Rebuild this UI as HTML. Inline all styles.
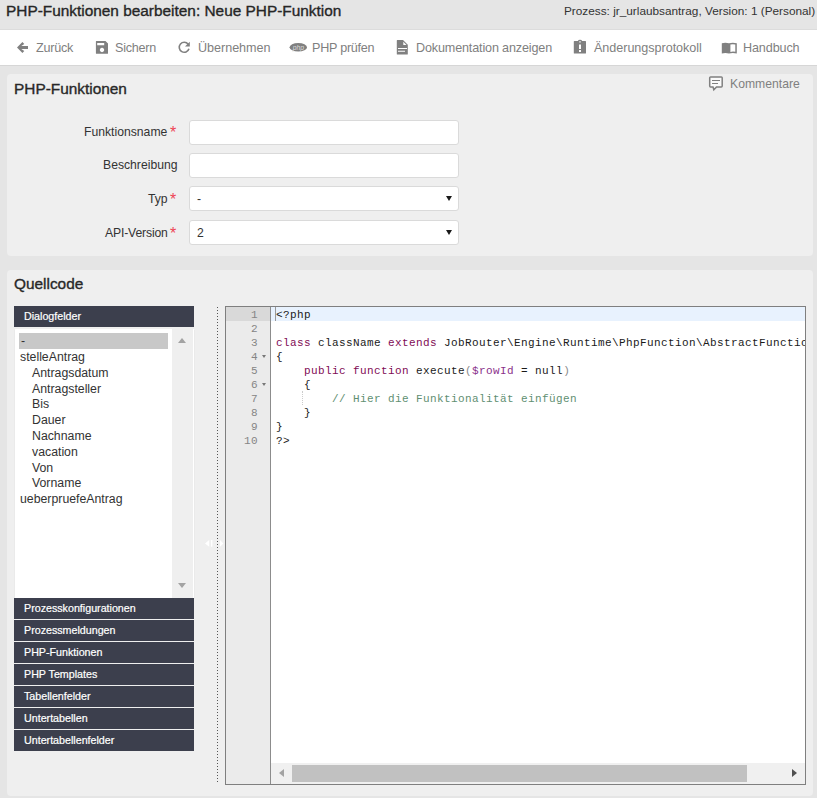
<!DOCTYPE html>
<html><head><meta charset="utf-8">
<style>
*{box-sizing:border-box;margin:0;padding:0}
html,body{width:817px;height:798px;overflow:hidden;background:#e5e5e5;font-family:"Liberation Sans",sans-serif;color:#333}
.a{position:absolute;white-space:nowrap}
#hdr{position:absolute;left:0;top:0;width:817px;height:30px;background:#e5e5e5;border-bottom:1px solid #dcdcdc}
.semi{-webkit-text-stroke:0.35px currentColor}
#tb{position:absolute;left:0;top:30px;width:817px;height:36px;background:#fff;border-bottom:1px solid #d6d6d6}
.ti{position:absolute;top:10px;font-size:12.6px;letter-spacing:-0.25px;line-height:16px;color:#808080;white-space:nowrap}
svg.ic{position:absolute;overflow:visible;z-index:5}
.panel{position:absolute;left:7px;width:806px;background:#efefef;border-radius:4px}
.lbl{position:absolute;font-size:12.2px;line-height:16px;color:#333;white-space:nowrap}
.req{position:absolute;font-size:16px;line-height:16px;color:#ee4455}
.inp{position:absolute;left:189px;width:270px;height:25px;background:#fff;border:1px solid #dadada;border-radius:3px}
.sv{position:absolute;left:7px;top:4px;font-size:12.2px;line-height:16px;color:#333}
.arr{position:absolute;left:256px;top:9px;width:0;height:0;border-left:3px solid transparent;border-right:3px solid transparent;border-top:5px solid #1a1a1a}
.acc{position:absolute;left:14px;width:180px;height:21px;background:#3c3f4d;color:#fff;-webkit-text-stroke:0.2px #fff;font-size:10.7px;padding-left:10px;line-height:21px;white-space:nowrap}
.li{position:absolute;font-size:12.3px;line-height:16px;color:#333;white-space:nowrap}
.code{position:absolute;left:276px;font-family:"Liberation Mono",monospace;font-size:11px;letter-spacing:0.4px;line-height:14px;white-space:pre;color:#1a1a1a}
.ln{position:absolute;left:226px;width:32px;text-align:right;font-family:"Liberation Mono",monospace;font-size:11px;letter-spacing:0.4px;line-height:14px;color:#858585}
.kw{color:#7f0b55}
.vr{color:#8a2f8a}
.pa{color:#8a8a8a}
.cm{color:#5f8f72}
.fold{position:absolute;left:262px;width:0;height:0;border-left:2.5px solid transparent;border-right:2.5px solid transparent;border-top:3px solid #777}
</style></head><body>
<div id="hdr"></div>
<div class="a semi" style="left:6px;top:2px;font-size:15.4px;line-height:18px;color:#262626">PHP-Funktionen bearbeiten: Neue PHP-Funktion</div>
<div class="a" style="left:564px;top:3px;font-size:11.8px;line-height:16px;color:#333">Prozess: jr_urlaubsantrag, Version: 1 (Personal)</div>

<div id="tb">
 <span class="ti" style="left:36px">Zurück</span>
 <span class="ti" style="left:115px">Sichern</span>
 <span class="ti" style="left:198px;letter-spacing:-0.03px">Übernehmen</span>
 <span class="ti" style="left:312px">PHP prüfen</span>
 <span class="ti" style="left:416px;letter-spacing:-0.15px">Dokumentation anzeigen</span>
 <span class="ti" style="left:594px;letter-spacing:-0.04px">Änderungsprotokoll</span>
 <span class="ti" style="left:743px;letter-spacing:-0.12px">Handbuch</span>
</div>
<!-- toolbar icons -->
<svg class="ic" style="left:0;top:0" width="817" height="100" viewBox="0 0 817 100">
 <g fill="#808080" stroke="none">
  <!-- arrow left -->
  <path d="M17 47.4 L22.4 42 L24.3 43.9 L21.3 46 L28 46 L28 48.9 L21.3 48.9 L24.3 51 L22.4 52.9 Z"/>
  <!-- save -->
  <path d="M95.9 41.6 Q95.9 41.1 96.4 41.1 L105.5 41.1 L108 43.6 L108 53.3 Q108 53.8 107.5 53.8 L96.4 53.8 Q95.9 53.8 95.9 53.3 Z M97.2 42.9 L97.2 45.2 L104.2 45.2 L104.2 42.9 Z M102 47.8 A2.2 2.2 0 1 0 102.01 47.8 Z"/>
  <!-- doc -->
  <path d="M396.8 40.5 Q396.8 40 397.3 40 L403 40 L407.8 44.8 L407.8 54 Q407.8 54.5 407.3 54.5 L397.3 54.5 Q396.8 54.5 396.8 54 Z M403.3 41.8 L403.3 45 L406.5 45 Z M398 47.9 L398 48.9 L407 48.9 L407 47.9 Z M398 50.7 L398 51.7 L405 51.7 L405 50.7 Z" fill-rule="evenodd"/>
  <!-- clipboard -->
  <path d="M573.8 41.6 Q573.8 41 574.4 41 L578 41 Q578 39.8 580 39.8 Q582 39.8 582 41 L585.4 41 Q586 41 586 41.6 L586 52.9 Q586 53.5 585.4 53.5 L574.4 53.5 Q573.8 53.5 573.8 52.9 Z M579.3 41.2 L579.3 42.6 L580.7 42.6 L580.7 41.2 Z M579 44.5 L579 49 L581 49 L581 44.5 Z M579 50 L579 52 L581 52 L581 50 Z" fill-rule="evenodd"/>
  <!-- book -->
  <path d="M721.8 43.3 Q725.3 42 729 43.3 Q732.8 42 736.8 43.3 L736.8 53.5 Q732.8 52.3 729 53.5 Q725.3 52.3 721.8 53.5 Z M730.4 44.5 L730.4 51.9 Q732.8 51.2 735.3 51.8 L735.3 44.5 Q732.8 43.9 730.4 44.5 Z" fill-rule="evenodd"/>
 </g>
 <!-- refresh -->
 <path d="M188.2 44.2 A5 5 0 1 0 189 48.8" fill="none" stroke="#808080" stroke-width="1.6"/>
 <path d="M185 46.6 L189.8 46.6 L189.8 41.8 Z" fill="#808080"/>
 <!-- php -->
 <ellipse cx="298.3" cy="47.3" rx="8.7" ry="4.3" fill="#808080"/>
 <text x="298.3" y="49.6" font-family="Liberation Sans" font-size="6.8" font-style="italic" fill="#dedede" text-anchor="middle">php</text>
 <!-- comment -->
 <path d="M710.6 76.9 L721.3 76.9 Q722.2 76.9 722.2 77.8 L722.2 86 Q722.2 86.9 721.3 86.9 L716.5 86.9 L713.8 89.8 L713 86.9 L710.6 86.9 Q709.7 86.9 709.7 86 L709.7 77.8 Q709.7 76.9 710.6 76.9 Z" fill="#fafafa" stroke="#808080" stroke-width="1.5"/>
 <path d="M712 80.5 L720 80.5 M712 83.5 L718 83.5" stroke="#808080" stroke-width="1.1"/>
</svg>

<div class="panel" style="top:74px;height:182px"></div>
<div class="a semi" style="left:14px;top:79.5px;font-size:15.4px;line-height:18px;color:#282828">PHP-Funktionen</div>
<div class="a" style="left:730px;top:76px;font-size:12.2px;line-height:16px;color:#808080">Kommentare</div>

<div class="lbl" style="left:84px;top:124px">Funktionsname</div><div class="req" style="left:170px;top:125px">*</div>
<div class="lbl" style="left:103px;top:157px">Beschreibung</div>
<div class="lbl" style="left:148px;top:191px">Typ</div><div class="req" style="left:170px;top:192px">*</div>
<div class="lbl" style="left:105px;top:225px;letter-spacing:-0.15px">API-Version</div><div class="req" style="left:170px;top:226px">*</div>
<div class="inp" style="top:120px"></div>
<div class="inp" style="top:153px"></div>
<div class="inp" style="top:186px"><div class="sv">-</div><div class="arr"></div></div>
<div class="inp" style="top:220px"><div class="sv">2</div><div class="arr"></div></div>

<div class="panel" style="top:270px;height:526px"></div>
<div class="a semi" style="left:14px;top:275px;font-size:15.4px;line-height:18px;color:#282828">Quellcode</div>

<div class="acc" style="top:306px">Dialogfelder</div>
<div class="a" style="left:15px;top:329px;width:179px;height:269px;background:#fff;box-shadow:0 1px 1px rgba(0,0,0,0.12)"></div>
<div class="a" style="left:172px;top:329px;width:21px;height:269px;background:#efefef"></div>
<div class="a" style="left:178px;top:338px;width:0;height:0;border-left:4.5px solid transparent;border-right:4.5px solid transparent;border-bottom:5px solid #a3a3a3"></div>
<div class="a" style="left:178px;top:583px;width:0;height:0;border-left:4.5px solid transparent;border-right:4.5px solid transparent;border-top:5px solid #a3a3a3"></div>
<div class="a" style="left:19px;top:333px;width:149px;height:16px;background:#c8c8c8"></div>
<div class="li" style="left:21px;top:333px">-</div>
<div class="li" style="left:20px;top:349px">stelleAntrag</div>
<div class="li" style="left:32px;top:365px">Antragsdatum</div>
<div class="li" style="left:32px;top:381px">Antragsteller</div>
<div class="li" style="left:32px;top:396px">Bis</div>
<div class="li" style="left:32px;top:412px">Dauer</div>
<div class="li" style="left:32px;top:428px">Nachname</div>
<div class="li" style="left:32px;top:444px">vacation</div>
<div class="li" style="left:32px;top:460px">Von</div>
<div class="li" style="left:32px;top:475px">Vorname</div>
<div class="li" style="left:20px;top:491px">ueberpruefeAntrag</div>

<div class="acc" style="top:598px">Prozesskonfigurationen</div>
<div class="acc" style="top:620px">Prozessmeldungen</div>
<div class="acc" style="top:642px">PHP-Funktionen</div>
<div class="acc" style="top:664px">PHP Templates</div>
<div class="acc" style="top:686px">Tabellenfelder</div>
<div class="acc" style="top:708px">Untertabellen</div>
<div class="acc" style="top:730px">Untertabellenfelder</div>

<div class="a" style="left:217px;top:307px;width:1px;height:477px;background:repeating-linear-gradient(to bottom,#555 0,#555 1px,transparent 1px,transparent 3px)"></div>

<div class="a" style="left:225px;top:306px;width:581px;height:479px;background:#fff;border:1px solid #7f7f7f"></div>
<div class="a" style="left:226px;top:307px;width:45px;height:477px;background:#ebebeb;border-right:1px solid #8c8c8c"></div>
<div class="a" style="left:271px;top:307px;width:534px;height:14px;background:#e8f2fe"></div>
<div class="a" style="left:226px;top:307px;width:44px;height:14px;background:#d9d9d9"></div>
<div class="a" style="left:275px;top:307px;width:1px;height:14px;background:#999"></div>

<div class="ln" style="top:308px">1</div>
<div class="ln" style="top:322px">2</div>
<div class="ln" style="top:336px">3</div>
<div class="ln" style="top:350px">4</div>
<div class="ln" style="top:364px">5</div>
<div class="ln" style="top:378px">6</div>
<div class="ln" style="top:392px">7</div>
<div class="ln" style="top:406px">8</div>
<div class="ln" style="top:420px">9</div>
<div class="ln" style="top:434px">10</div>
<div class="fold" style="top:355px"></div>
<div class="fold" style="top:383px"></div>

<div class="a" style="left:271px;top:307px;width:534px;height:456px;overflow:hidden">
<div class="code" style="left:5px;top:1px">&lt;?php</div>
<div class="code" style="left:5px;top:29px"><span class="kw">class</span> className <span class="kw">extends</span> JobRouter\Engine\Runtime\PhpFunction\AbstractFunction</div>
<div class="code" style="left:5px;top:43px">{</div>
<div class="code" style="left:5px;top:57px">    <span class="kw">public</span> <span class="kw">function</span> execute<span class="pa">(</span><span class="vr">$rowId</span> = null<span class="pa">)</span></div>
<div class="code" style="left:5px;top:71px">    {</div>
<div class="code" style="left:5px;top:85px">        <span class="cm">// Hier die Funktionalität einfügen</span></div>
<div class="code" style="left:5px;top:99px">    }</div>
<div class="code" style="left:5px;top:113px">}</div>
<div class="code" style="left:5px;top:127px">?&gt;</div>
<div class="a" style="left:31px;top:84px;width:1px;height:14px;border-left:1px dotted #ccc"></div>
</div>

<!-- h scrollbar -->
<div class="a" style="left:271px;top:763px;width:534px;height:21px;background:#f0f0f0"></div>
<div class="a" style="left:292px;top:765px;width:455px;height:17px;background:#c1c1c1"></div>
<div class="a" style="left:279px;top:769px;width:0;height:0;border-top:4.5px solid transparent;border-bottom:4.5px solid transparent;border-right:5px solid #a3a3a3"></div>
<div class="a" style="left:792px;top:769px;width:0;height:0;border-top:4.5px solid transparent;border-bottom:4.5px solid transparent;border-left:5px solid #505050"></div>

<!-- splitter handle -->
<svg class="ic" style="left:200px;top:535px" width="30" height="16" viewBox="0 0 30 16">
 <path d="M5 8.4 L9.2 5 L9.2 11.8 Z M11 5 L12.4 5 L12.4 11.8 L11 11.8 Z M20 5 L23.4 8.4 L20 11.8 Z" fill="#fff"/>
</svg>
</body></html>
